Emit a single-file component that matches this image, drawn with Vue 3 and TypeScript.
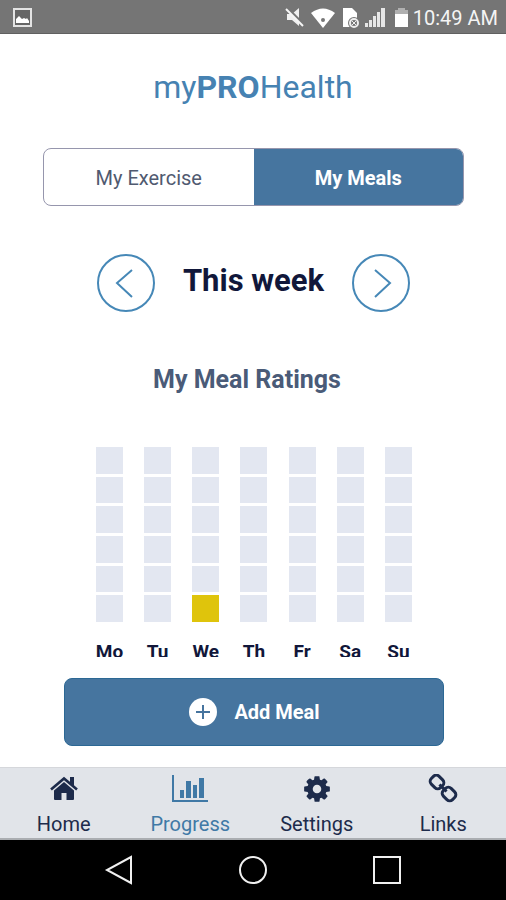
<script setup lang="ts">
import { ref } from 'vue'

interface Day {
  label: string
  rated: number
}

type TabId = 'home' | 'progress' | 'settings' | 'links'

const sections = ['My Exercise', 'My Meals'] as const
const section = ref<(typeof sections)[number]>('My Meals')
const tab = ref<TabId>('progress')

const levels = [6, 5, 4, 3, 2, 1]
const days: Day[] = [
  { label: 'Mo', rated: 0 },
  { label: 'Tu', rated: 0 },
  { label: 'We', rated: 1 },
  { label: 'Th', rated: 0 },
  { label: 'Fr', rated: 0 },
  { label: 'Sa', rated: 0 },
  { label: 'Su', rated: 0 },
]

const tabs: { id: TabId; label: string }[] = [
  { id: 'home', label: 'Home' },
  { id: 'progress', label: 'Progress' },
  { id: 'settings', label: 'Settings' },
  { id: 'links', label: 'Links' },
]
</script>

<template>
  <div class="screen">
    <div class="status">
      <svg class="picture" width="22" height="22" viewBox="0 0 22 22">
        <rect x="2" y="2" width="17" height="17" fill="#666" stroke="#e4e4e4" stroke-width="2" />
        <path d="M4 16v-4l3-3 3 3 2-1 2 1 1-1 2 3v2z" fill="#fff" />
      </svg>
      <div class="indicators">
        <svg width="22" height="22" viewBox="0 0 22 22">
          <path d="M3 7h5l7-6v18l-7-6H3z" fill="#f0f0f0" />
          <path d="M3 1l17 17" stroke="#757575" stroke-width="3" />
          <path d="M2 2l17 17" stroke="#f6f6f6" stroke-width="2" />
        </svg>
        <svg width="26" height="22" viewBox="0 0 26 22">
          <path d="M1 6Q13-3 25 6L13 21z" fill="#fff" />
          <circle cx="13" cy="13" r="2" fill="#777" />
        </svg>
        <svg width="20" height="22" viewBox="0 0 20 22">
          <path d="M3 1h9l5 5v14H3z" fill="#fff" />
          <circle cx="14" cy="16" r="6" fill="#757575" />
          <circle cx="14" cy="16" r="4" fill="none" stroke="#eee" stroke-width="2" />
          <path d="M12 14l4 4M16 14l-4 4" stroke="#eee" stroke-width="1" />
        </svg>
        <svg width="22" height="22" viewBox="0 0 22 22">
          <path d="M1 16h3v4H1zM5 13h3v7H5zM9 9h3v11H9zM13 5h3v15h-3zM17 1h4v19h-4z" fill="#e6e6e6" />
        </svg>
        <svg class="battery" width="15" height="22" viewBox="0 0 15 22">
          <path d="M4 1h7v2h3v4H1V3h3z" fill="#b0b0b0" />
          <path d="M1 7h13v13H1z" fill="#fff" />
        </svg>
      </div>
      <span class="clock">10:49 AM</span>
    </div>

    <main class="content">
      <h1 class="brand">my<b>PRO</b>Health</h1>

      <div class="segments">
        <button
          v-for="name in sections"
          :key="name"
          type="button"
          class="segment"
          :class="{ active: section === name }"
          :aria-pressed="section === name"
          @click="section = name"
        >
          {{ name }}
        </button>
      </div>

      <div class="week">
        <button type="button" class="round" aria-label="Previous week">
          <svg width="58" height="58" viewBox="0 0 58 58">
            <circle cx="29" cy="29" r="28" />
            <path d="M35 16L20 29l15 14" />
          </svg>
        </button>
        <h2>This week</h2>
        <button type="button" class="round" aria-label="Next week">
          <svg width="58" height="58" viewBox="0 0 58 58">
            <circle cx="29" cy="29" r="28" />
            <path d="M23 16l15 13-15 14" />
          </svg>
        </button>
      </div>

      <h3 class="heading">My Meal Ratings</h3>

      <div class="chart">
        <div v-for="day in days" :key="day.label" class="day">
          <div class="bar">
            <div v-for="level in levels" :key="level" class="cell" :class="{ filled: level <= day.rated }"></div>
          </div>
          <span class="name">{{ day.label }}</span>
        </div>
      </div>
    </main>

    <div class="action">
      <button type="button" class="add">
        <svg width="30" height="30" viewBox="0 0 30 30">
          <circle cx="15" cy="15" r="14" fill="#fff" />
          <path d="M8 15h14M15 8v14" stroke="#46749e" stroke-width="2" />
        </svg>
        <span>Add Meal</span>
      </button>
    </div>

    <nav class="tabs">
      <a
        v-for="item in tabs"
        :key="item.id"
        :href="'#' + item.id"
        class="tab"
        :class="{ current: tab === item.id }"
        @click="tab = item.id"
      >
        <svg v-if="item.id === 'home'" width="30" height="30" viewBox="0 0 30 30">
          <path d="M2 15.500L15 4.500l13 11" fill="none" stroke="currentColor" stroke-width="2.600" />
          <path d="M21 3h4v10l-4-4z" fill="currentColor" />
          <path d="M15 8l10 8.500v8.500q0 1-1 1h-6.500v-7h-5v7H6q-1 0-1-1v-8.500z" fill="currentColor" />
        </svg>
        <svg v-else-if="item.id === 'progress'" width="36" height="30" viewBox="0 0 36 30">
          <path d="M1 1v26h35" fill="none" stroke="currentColor" stroke-width="2" />
          <path d="M8 16h4v8H8zM14 7h5v17h-5zM21 11h4v13h-4zM27 4h5v20h-5z" fill="currentColor" />
        </svg>
        <svg v-else-if="item.id === 'settings'" width="30" height="30" viewBox="0 0 1792 1792">
          <path
            fill="currentColor"
            d="M1152 896q0-106-75-181t-181-75-181 75-75 181 75 181 181 75 181-75 75-181zm512-109v222q0 12-8 23t-20 13l-185 28q-19 54-39 91 35 50 107 138 10 12 10 25t-9 23q-27 37-99 108t-94 71q-12 0-26-9l-138-108q-44 23-91 38-16 136-29 186-7 28-36 28h-222q-14 0-24.500-8.500t-11.500-21.500l-28-184q-49-16-90-37l-141 107q-10 9-25 9-14 0-25-11-126-114-165-168-7-10-7-23 0-12 8-23 15-21 51-66.500t54-70.500q-27-50-41-99l-183-27q-13-2-21-12.500t-8-23.500v-222q0-12 8-23t19-13l186-28q14-46 39-92-40-57-107-138-10-12-10-24 0-10 9-23 26-36 98.500-107.500t94.500-71.500q13 0 26 10l138 107q44-23 91-38 16-136 29-186 7-28 36-28h222q14 0 24.500 8.500t11.500 21.500l28 184q49 16 90 37l142-107q9-9 24-9 13 0 25 10 129 119 165 170 7 8 7 22 0 12-8 23-15 21-51 66.500t-54 70.500q26 50 41 98l183 28q13 2 21 12.500t8 23.500z"
          />
        </svg>
        <svg v-else width="30" height="30" viewBox="0 0 30 30">
          <g transform="rotate(45 15 14)" fill="none" stroke="currentColor" stroke-width="3">
            <rect x="0" y="8.500" width="13" height="11" rx="4" />
            <rect x="17" y="8.500" width="13" height="11" rx="4" />
            <path d="M10 14h10" />
          </g>
        </svg>
        <span>{{ item.label }}</span>
      </a>
    </nav>

    <div class="system">
      <button type="button" aria-label="Back">
        <svg width="30" height="30" viewBox="0 0 30 30"><path d="M27 2v26L3 15z" /></svg>
      </button>
      <button type="button" aria-label="Home screen">
        <svg width="30" height="30" viewBox="0 0 30 30"><circle cx="15" cy="15" r="13" /></svg>
      </button>
      <button type="button" aria-label="Recent apps">
        <svg width="30" height="30" viewBox="0 0 30 30"><rect x="2" y="2" width="26" height="26" /></svg>
      </button>
    </div>
  </div>
</template>

<style>
body {
  margin: 0;
  background: #fff;
}
</style>

<style scoped>
.screen {
  display: flex;
  flex-direction: column;
  height: 100vh;
  font-family: Roboto, "Liberation Sans", sans-serif;
  color: #11173a;
}

button {
  margin: 0;
  padding: 0;
  border: 0;
  background: none;
  font: inherit;
  color: inherit;
}

svg {
  display: block;
  flex: none;
}

.status {
  display: flex;
  align-items: center;
  flex: none;
  box-sizing: border-box;
  height: 34px;
  padding: 2px 8px 0 12px;
  border-bottom: 1px solid #606060;
  background: #757575;
  color: #f4f4f4;
}

.indicators {
  display: flex;
  gap: 4px;
  margin-left: auto;
}

.battery {
  margin-left: 4px;
}

.clock {
  margin-left: 4px;
  font-size: 20px;
}

.content {
  flex: 1;
  min-height: 0;
  overflow: hidden;
}

.brand {
  margin: 32px 0 0;
  text-align: center;
  font-size: 32px;
  line-height: 42px;
  font-weight: 400;
  color: #4682b2;
}

.segments {
  display: flex;
  box-sizing: border-box;
  height: 58px;
  margin: 40px 42px 0 43px;
  overflow: hidden;
  border: 1px solid #9696ad;
  border-radius: 8px;
}

.segment {
  flex: 1;
  padding-top: 1px;
  font-size: 20px;
  color: #505a70;
}

.segment.active {
  background: #46759f;
  font-weight: 700;
  color: #fff;
}

.week {
  display: flex;
  align-items: center;
  justify-content: space-between;
  margin: 48px 96px 0 97px;
}

.week h2 {
  margin: 0 0 4px;
  font-size: 31px;
  line-height: 40px;
  font-weight: 700;
}

.round {
  fill: none;
  stroke: #4688b7;
  stroke-width: 2;
}

.heading {
  margin: 52px 0 0;
  padding-right: 12px;
  text-align: center;
  font-size: 25px;
  line-height: 32px;
  font-weight: 700;
  color: #4a5b78;
}

.chart {
  display: flex;
  justify-content: space-between;
  margin: 51px 94px 0 96px;
}

.day {
  display: flex;
  flex-direction: column;
  align-items: center;
  gap: 17px;
  width: 27px;
}

.bar {
  display: flex;
  flex-direction: column;
  gap: 3px;
  width: 100%;
  height: 175px;
}

.cell {
  flex: 1;
  background: #e3e7f1;
}

.cell.filled {
  background: #dfc40c;
}

.name {
  font-size: 19px;
  line-height: 26px;
  font-weight: 700;
}

.action {
  flex: none;
  padding: 21px 62px 21px 64px;
}

.add {
  display: flex;
  align-items: center;
  justify-content: center;
  gap: 16px;
  box-sizing: border-box;
  width: 100%;
  height: 68px;
  border: 1px solid #2c6894;
  border-radius: 8px;
  background: #46759f;
  color: #fff;
  font-size: 20px;
  font-weight: 700;
}

.tabs {
  display: flex;
  flex: none;
  box-sizing: border-box;
  height: 73px;
  border-top: 1px solid #d5d7db;
  border-bottom: 2px solid #aaadb1;
  background: #e1e4e9;
}

.tab {
  display: flex;
  flex: 1;
  flex-direction: column;
  align-items: center;
  padding: 6px 0 0 1px;
  gap: 8px;
  font-size: 20px;
  line-height: 24px;
  color: #1d2b4b;
  text-decoration: none;
}

.tab.current {
  color: #4079a6;
}

.system {
  display: flex;
  flex: none;
  align-items: center;
  justify-content: center;
  gap: 104px;
  height: 60px;
  background: #000;
  fill: none;
  stroke: #f0f0f0;
  stroke-width: 2;
}
</style>
